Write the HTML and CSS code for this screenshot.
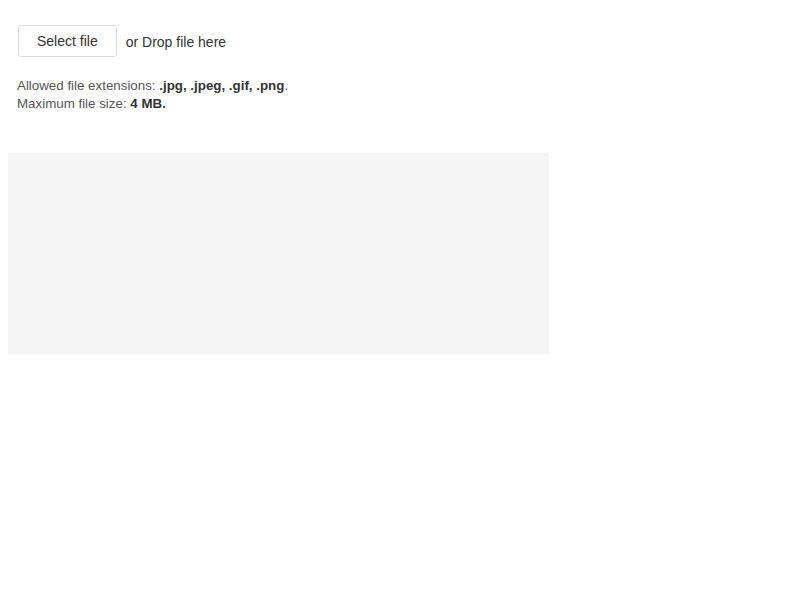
FILE: index.html
```html
<!DOCTYPE html>
<html>
<head>
<meta charset="utf-8">
<link rel="stylesheet" href="styles.css">
</head>
<body>
<div class="uploader">
  <div class="drop-row">
    <button class="select-btn" type="button">Select file</button>
    <span class="drop-text">or Drop file here</span>
  </div>
  <div class="rules">
    <div>Allowed file extensions: <strong>.jpg, .jpeg, .gif, .png</strong>.</div>
    <div>Maximum file size: <strong>4 MB.</strong></div>
  </div>
</div>
<div class="preview"></div>
</body>
</html>
```
FILE: styles.css
```css
html, body {
  margin: 0;
  padding: 0;
  background: #fff;
}
body {
  margin: 8px;
  font-family: "Liberation Sans", Arial, Helvetica, sans-serif;
  color: #333;
}
.uploader {
  padding: 17px 0 0 9px;
}
.drop-row {
  display: flex;
  align-items: center;
  padding-left: 1px;
}
.select-btn {
  font-family: "Liberation Sans", Arial, Helvetica, sans-serif;
  font-size: 14px;
  line-height: 20px;
  color: #333;
  background: #fff;
  border: 1px solid #dcdcdc;
  border-radius: 3px;
  padding: 5px 18px;
  height: 32px;
  margin: 0;
  display: flex;
  align-items: center;
}
.drop-text {
  margin-left: 9px;
  font-size: 14px;
  line-height: 20px;
  margin-top: 2px;
}
.rules {
  margin-top: 20px;
  font-size: 13.33px;
  line-height: 18px;
  color: #555;
}
.rules strong {
  color: #333;
}
.preview {
  margin-top: 40px;
  width: 541px;
  height: 201px;
  background: #f5f5f5;
}
```
